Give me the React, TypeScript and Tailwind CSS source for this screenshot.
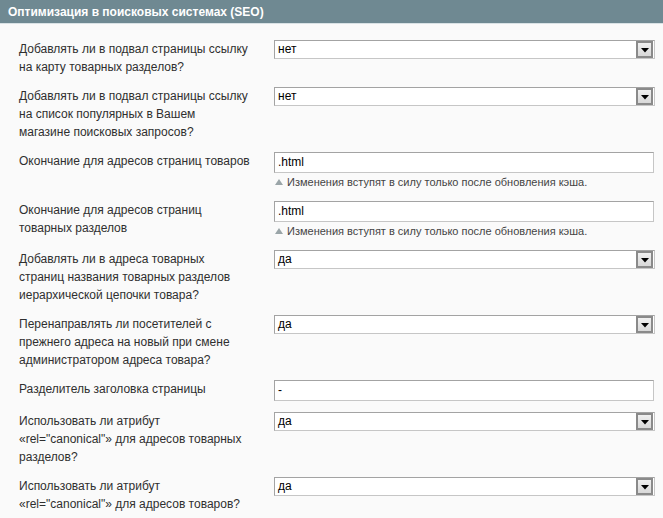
import React from "react";

type Row =
  | { kind: "select"; label: string[]; value: string }
  | { kind: "input"; label: string[]; value: string; hint?: boolean };

const rows: Row[] = [
  { kind: "select", label: ["Добавлять ли в подвал страницы ссылку", "на карту товарных разделов?"], value: "нет" },
  {
    kind: "select",
    label: ["Добавлять ли в подвал страницы ссылку", "на список популярных в Вашем", "магазине поисковых запросов?"],
    value: "нет",
  },
  { kind: "input", label: ["Окончание для адресов страниц товаров"], value: ".html", hint: true },
  { kind: "input", label: ["Окончание для адресов страниц", "товарных разделов"], value: ".html", hint: true },
  {
    kind: "select",
    label: ["Добавлять ли в адреса товарных", "страниц названия товарных разделов", "иерархической цепочки товара?"],
    value: "да",
  },
  {
    kind: "select",
    label: ["Перенаправлять ли посетителей с", "прежнего адреса на новый при смене", "администратором адреса товара?"],
    value: "да",
  },
  { kind: "input", label: ["Разделитель заголовка страницы"], value: "-" },
  {
    kind: "select",
    label: ["Использовать ли атрибут", "«rel=\"canonical\"» для адресов товарных", "разделов?"],
    value: "да",
  },
  {
    kind: "select",
    label: ["Использовать ли атрибут", "«rel=\"canonical\"» для адресов товаров?"],
    value: "да",
  },
];

function SelectBox({ value }: { value: string }) {
  return (
    <div className="flex h-[19px] w-[381px] items-center border border-t-[#a3a3a3] border-l-[#a3a3a3] border-b-[#c6c6c6] border-r-[#c6c6c6] bg-white">
      <span className="flex-1 pl-[3px] text-[12px] leading-[17px] text-black">{value}</span>
      <div className="mr-[1px] flex h-[17px] w-[17px] items-center justify-center border-2 border-[#8a8a8a] bg-gradient-to-b from-[#f0f0f0] to-[#d8d8d8]">
        <svg width="8" height="5" viewBox="0 0 8 5" className="mt-[2px]">
          <polygon points="0,0 8,0 4,4.5" fill="#000" />
        </svg>
      </div>
    </div>
  );
}

function InputBox({ value, hint }: { value: string; hint?: boolean }) {
  return (
    <div className="flex flex-col">
      <div className="flex h-[21px] w-[380px] items-center border border-t-[#a3a3a3] border-l-[#a3a3a3] border-b-[#c6c6c6] border-r-[#c6c6c6] bg-white">
        <span className="pl-[3px] text-[12px] leading-[17px] text-black">{value}</span>
      </div>
      {hint && (
        <div className="mt-[1px] flex items-center text-[11px] leading-[16px] text-[#444]">
          <svg width="8" height="6" viewBox="0 0 8 6" className="ml-[1px] mr-[4px]">
            <polygon points="0,6 8,6 4,0" fill="#9aa5a8" />
          </svg>
          <span>Изменения вступят в силу только после обновления кэша.</span>
        </div>
      )}
    </div>
  );
}

export default function App() {
  return (
    <div
      className="h-[518px] w-[663px] overflow-hidden bg-[#fafafa]"
      style={{ fontFamily: '"Liberation Sans", Arial, sans-serif' }}
    >
      <div className="flex h-[23px] items-center bg-[#6f8992] pl-[8px] text-[12px] font-bold text-white">
        Оптимизация в поисковых системах (SEO)
      </div>
      <div className="h-[1px] bg-[#d9e2e5]" />
      <div className="flex flex-col gap-[11px] pt-[16px]">
        {rows.map((r, i) => (
          <div key={i} className="flex">
            <div className="w-[274px] pl-[19px] text-[12px] leading-[18px] text-[#2f2f2f]">
              {r.label.map((l, j) => (
                <div key={j}>{l}</div>
              ))}
            </div>
            {r.kind === "select" ? <SelectBox value={r.value} /> : <InputBox value={r.value} hint={r.hint} />}
          </div>
        ))}
      </div>
    </div>
  );
}
